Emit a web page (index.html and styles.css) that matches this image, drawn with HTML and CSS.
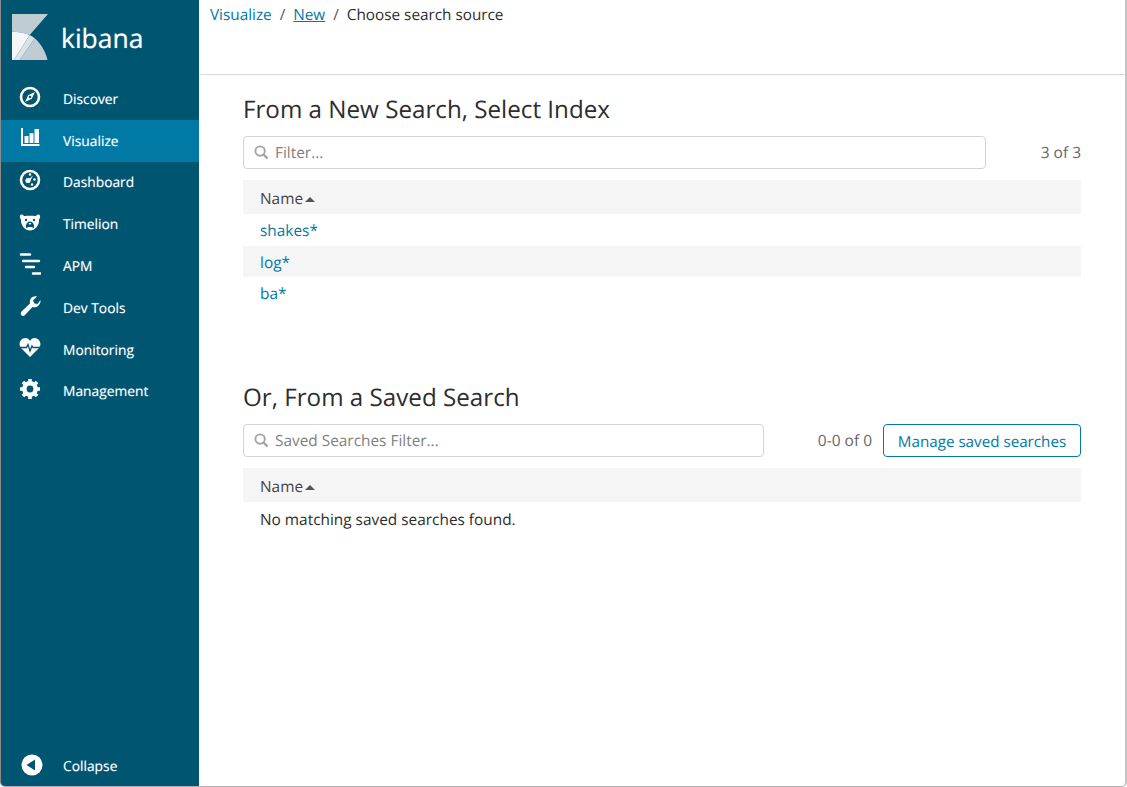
FILE: index.html
```html
<!DOCTYPE html>
<html lang="en">
<head>
  <meta charset="UTF-8" />
  <title>Kibana</title>
  <link rel="stylesheet" href="styles.css">
</head>
<body>
  <div class="window">
    <nav class="sidebar">
      <div class="brand">
        <svg class="logo" viewBox="0 0 36 46" width="36" height="46">
          <path d="M0 0H36L17.700 21C12 18.800 6 17.700 0 17.700Z" fill="#bfcdd3"/>
          <path d="M22.700 24.300C28 29 33 36 35.500 46H7.700Z" fill="#bfcdd3"/>
          <path d="M0 17.700C6 17.700 12 18.800 17.700 21L2 46H0Z" fill="#f4f6f7"/>
          <path d="M17.700 21C19.500 22 21 23 22.700 24.300L7.700 46H2Z" fill="#dbe3e6"/>
        </svg>
        <span class="wordmark">kibana</span>
      </div>
      <ul class="nav">
        <li class="nav-item">
          <svg class="nav-icon" viewBox="0 0 22 22"><circle cx="11" cy="11" r="9" fill="none" stroke="#fff" stroke-width="2.600"/><path d="M16 6L12.800 12.800L6 16L9.200 9.200Z" fill="#fff"/><circle cx="11" cy="11" r="1.300" fill="#005571"/></svg>
          Discover
        </li>
        <li class="nav-item active">
          <svg class="nav-icon" viewBox="0 0 22 22"><path d="M3 0V17H20.500" fill="none" stroke="#fff" stroke-width="2"/><path d="M5.500 8H9.500V15H5.500ZM10.500 5.300H14.500V15H10.500ZM15.500 1H20V15H15.500Z" fill="#fff"/></svg>
          Visualize
        </li>
        <li class="nav-item">
          <svg class="nav-icon" viewBox="0 0 22 22"><circle cx="11" cy="11" r="9" fill="none" stroke="#fff" stroke-width="2.600"/><circle cx="9" cy="11.500" r="2.600" fill="#fff"/><path d="M9 11L14 6.500L11 12.500Z" fill="#fff"/><circle cx="11" cy="5.500" r="1.200" fill="#fff"/><circle cx="15.500" cy="10.500" r="1.200" fill="#fff"/><circle cx="13" cy="15.500" r="1.200" fill="#fff"/></svg>
          Dashboard
        </li>
        <li class="nav-item">
          <svg class="nav-icon" viewBox="0 0 22 22"><g transform="translate(0 1.500)"><path d="M1 3C2 1.500 4 2 5 3.500C8 3 14 3 17 3.500C18 2 20 1.500 21 3C21.500 5 20.500 6.500 20 7C20.500 13 16 18 11 18C6 18 1.500 13 2 7C1.500 6.500 .5 5 1 3Z" fill="#fff"/><circle cx="7" cy="7.500" r="1.200" fill="#005571"/><circle cx="15" cy="7.500" r="1.200" fill="#005571"/><path d="M11 9C14 9 15.500 12 15 15.500C13 14 9 14 7 15.500C6.500 12 8 9 11 9Z" fill="#005571"/><path d="M9.500 10.500H12.500L11 12.500Z" fill="#fff"/></g></svg>
          Timelion
        </li>
        <li class="nav-item">
          <svg class="nav-icon" viewBox="0 0 22 22"><path d="M2 1.500H11M4 8H20M7 14H15M14 20.500H22" fill="none" stroke="#fff" stroke-width="2.400" stroke-linecap="round"/></svg>
          APM
        </li>
        <li class="nav-item">
          <svg class="nav-icon" viewBox="0 0 22 22"><path d="M2.500 16.500L11 8.500C10 4 13.500 .5 18 1.500L14 5.500L15.500 8.500L18.500 9L21.500 5C22 9.500 18 13.500 13.500 12L5.500 20.500C3 22 .5 19.500 2.500 16.500Z" fill="#fff"/></svg>
          Dev Tools
        </li>
        <li class="nav-item">
          <svg class="nav-icon" viewBox="0 0 22 22"><path d="M11 20L2 11C-1.500 6.500 2 1 6.500 1C8.500 1 10 2 11 4C12 2 13.500 1 15.500 1C20 1 23.500 6.500 20 11Z" fill="#fff"/><path d="M1 10.500H7.500L9 7.500L11 14L13 9L14 10.500H21" fill="none" stroke="#005571" stroke-width="1.300"/></svg>
          Monitoring
        </li>
        <li class="nav-item">
          <svg class="nav-icon" viewBox="0 0 22 22"><circle cx="11" cy="11" r="5.800" fill="none" stroke="#fff" stroke-width="4.200"/><path d="M11 1V21M1 11H21M3.900 3.900L18.100 18.100M18.100 3.900L3.900 18.100" stroke="#fff" stroke-width="3.600" fill="none"/><circle cx="11" cy="11" r="3.400" fill="#005571"/></svg>
          Management
        </li>
      </ul>
      <div class="nav-item collapse">
        <svg class="nav-icon" viewBox="0 0 22 22"><circle cx="11" cy="11" r="10.500" fill="#fff"/><path d="M5.500 11L14 5.500V16.500Z" fill="#005571"/></svg>
        Collapse
      </div>
    </nav>

    <main class="content">
      <header class="topbar">
        <a class="crumb" href="#">Visualize</a><span class="sep">/</span><a class="crumb crumb-under" href="#">New</a><span class="sep">/</span><span>Choose search source</span>
      </header>

      <section class="panel panel-first">
        <h2>From a New Search, Select Index</h2>
        <div class="tools">
          <div class="search search-wide">
            <svg class="search-icon" viewBox="0 0 16 16"><circle cx="6.500" cy="6.500" r="5" fill="none" stroke="#a3a3a3" stroke-width="2"/><path d="M10.300 10.300L14.500 14.500" stroke="#a3a3a3" stroke-width="2.400"/></svg>
            <input type="text" placeholder="Filter..." />
          </div>
          <span class="count count-wide">3 of 3</span>
        </div>
        <table class="list">
          <thead><tr><th>Name <span class="caret"></span></th></tr></thead>
          <tbody>
            <tr><td><a href="#">shakes*</a></td></tr>
            <tr class="odd"><td><a href="#">log*</a></td></tr>
            <tr><td><a href="#">ba*</a></td></tr>
          </tbody>
        </table>
      </section>

      <section class="panel panel-second">
        <h2>Or, From a Saved Search</h2>
        <div class="tools">
          <div class="search search-saved">
            <svg class="search-icon" viewBox="0 0 16 16"><circle cx="6.500" cy="6.500" r="5" fill="none" stroke="#a3a3a3" stroke-width="2"/><path d="M10.300 10.300L14.500 14.500" stroke="#a3a3a3" stroke-width="2.400"/></svg>
            <input type="text" placeholder="Saved Searches Filter..." />
          </div>
          <span class="count">0-0 of 0</span>
          <button class="btn">Manage saved searches</button>
        </div>
        <table class="list">
          <thead><tr><th>Name <span class="caret"></span></th></tr></thead>
          <tbody>
            <tr><td class="empty">No matching saved searches found.</td></tr>
          </tbody>
        </table>
      </section>
    </main>
  </div>
</body>
</html>
```

FILE: styles.css
```css
html, body {
  height: 100%;
}

body {
  margin: 0;
  background: #fff;
  font-family: "Open Sans", sans-serif;
  font-size: 14px;
  color: #2d2d2d;
  text-rendering: geometricPrecision;
  overflow: hidden;
}

.window {
  display: flex;
  height: 787px;
  width: 1127px;
  box-sizing: border-box;
  border-left: 1px solid #8a8a8a;
  border-right: 2px solid #c4c4c4;
  border-bottom: 1px solid #b0b0b0;
  border-radius: 0 0 5px 5px;
  overflow: hidden;
}

.sidebar {
  width: 198px;
  flex: none;
  background: #005571;
  color: #fff;
  display: flex;
  flex-direction: column;
}

.brand {
  height: 78px;
  padding: 14px 0 0 11px;
  box-sizing: border-box;
  display: flex;
  align-items: flex-start;
}

.wordmark {
  font-size: 26.500px;
  line-height: 48px;
  margin-left: 13px;
  text-shadow: 0 0 1px rgba(255, 255, 255, .5);
}

.nav {
  list-style: none;
  margin: 0;
  padding: 0;
}

.nav-item {
  height: 41.800px;
  box-sizing: border-box;
  display: flex;
  align-items: center;
  padding: 1px 0 0 18px;
  font-size: 13.800px;
  font-weight: 500;
  color: #fff;
  text-shadow: 0 0 1px rgba(255, 255, 255, .4);
}

.nav-item.active {
  background: #0079a5;
}

.nav-icon {
  width: 22px;
  height: 22px;
  margin-right: 22px;
  margin-top: -5px;
}

.collapse {
  margin-top: auto;
  padding-top: 3px;
}

.collapse .nav-icon {
  margin-left: 2px;
  margin-right: 20px;
  margin-top: -3px;
}

.content {
  flex: 1;
  min-width: 0;
}

.topbar {
  height: 75px;
  box-sizing: border-box;
  border-bottom: 1px solid #d9d9d9;
  padding: 4px 0 0 11px;
  font-size: 15.300px;
  line-height: 22px;
}

.crumb {
  color: #0079a5;
  text-decoration: none;
}

.crumb-under {
  text-decoration: underline;
}

.sep {
  margin: 0 8px;
  color: #555;
}

.panel {
  margin: 0 44px;
}

.panel-first {
  padding-top: 18px;
  height: 287px;
}

.panel-second {
  padding-top: 1px;
}

.panel h2 {
  margin: 0 0 10px;
  font-size: 24.200px;
  font-weight: 400;
  line-height: 33px;
}

.tools {
  display: flex;
  align-items: center;
  justify-content: space-between;
  margin-bottom: 11px;
}

.search {
  box-sizing: border-box;
  height: 33px;
  border: 1px solid #d4d4d4;
  border-radius: 4px;
  display: flex;
  align-items: center;
  padding-left: 10px;
}

.search-wide {
  width: 743px;
}

.search-saved {
  width: 521px;
  margin-right: auto;
}

.search-icon {
  width: 15px;
  height: 15px;
  margin-right: 6px;
}

.search input {
  border: none;
  outline: none;
  flex: 1;
  min-width: 0;
  padding: 0;
  font: 15.400px "Open Sans", sans-serif;
  text-rendering: geometricPrecision;
}

.search input::placeholder {
  color: #808080;
  opacity: 1;
}

.count {
  color: #666;
  font-size: 15.500px;
  margin-right: 11px;
  padding-bottom: 2px;
}

.count-wide {
  margin-right: 0;
}

.btn {
  box-sizing: border-box;
  width: 198px;
  height: 33px;
  padding: 2px 0 0;
  background: #fff;
  border: 1px solid #0079a5;
  border-radius: 4px;
  color: #0079a5;
  font: 15.200px "Open Sans", sans-serif;
  text-rendering: geometricPrecision;
}

.list {
  width: 100%;
  border-collapse: collapse;
  font-size: 15.400px;
}

.list th {
  background: #f5f5f5;
  height: 34px;
  padding: 2px 0 0 17px;
  box-sizing: border-box;
  text-align: left;
  font-weight: 400;
  color: #444;
}

.list td {
  height: 31.500px;
  padding: 1px 0 0 17px;
  box-sizing: border-box;
}

.list a {
  color: #0079a5;
  text-decoration: none;
}

.list .odd td {
  background: #f5f5f5;
  padding-top: 2px;
}

.list td.empty {
  height: 33px;
}

.caret {
  display: inline-block;
  width: 0;
  height: 0;
  margin-left: -2px;
  border-left: 5px solid transparent;
  border-right: 5px solid transparent;
  border-bottom: 5px solid #555;
  vertical-align: 2px;
}
```
